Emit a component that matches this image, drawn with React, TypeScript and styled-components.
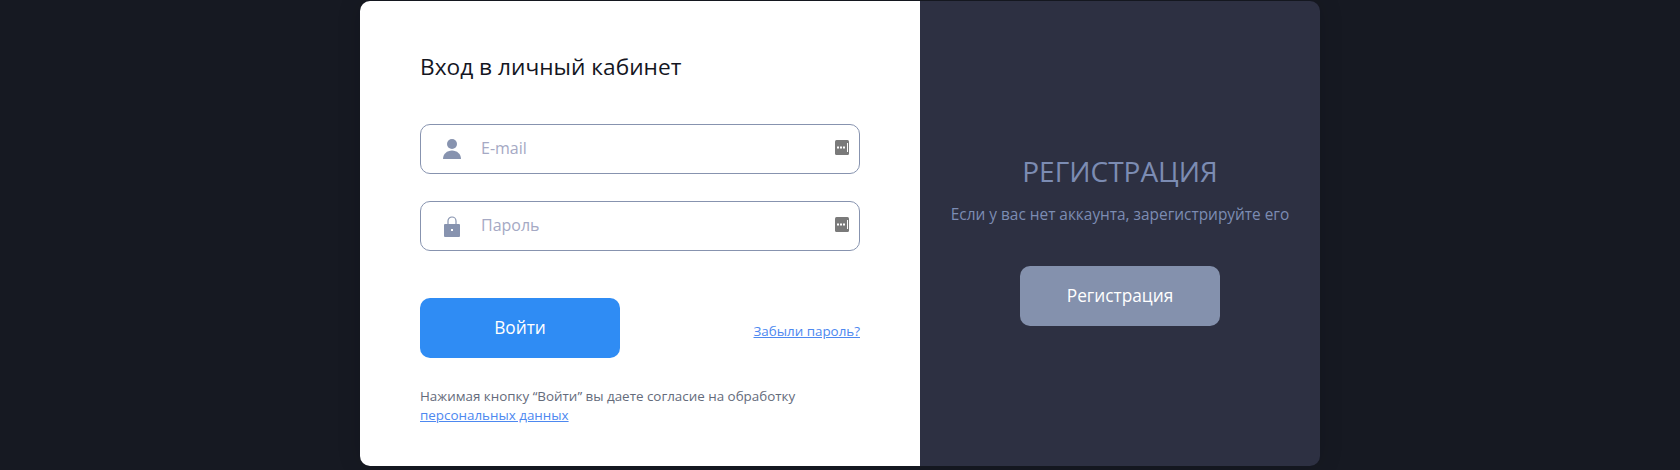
import React from "react";
import styled, { createGlobalStyle } from "styled-components";

const GlobalStyle = createGlobalStyle`
	html, body {
		margin: 0;
		padding: 0;
		background-color: #161922;
		font-family: "Open Sans", "Noto Sans", sans-serif;
	}
`;

const Page = styled.div`
	width: 1680px;
	height: 470px;
	overflow: hidden;
	display: flex;
	justify-content: center;
	padding-top: 1px;
	box-sizing: border-box;
`;

const Card = styled.div`
	display: flex;
	width: 960px;
	height: 465px;
	border-radius: 10px;
	overflow: hidden;
	box-shadow: 0 0 24px rgba(0, 0, 0, 0.14);
`;

const LoginPart = styled.form`
	width: 560px;
	box-sizing: border-box;
	background-color: #fff;
	padding: 51px 60px 0;
	display: flex;
	flex-direction: column;
`;

const Heading = styled.h2`
	margin: 0 0 42px;
	font-size: 22.7px;
	line-height: 30px;
	font-weight: 400;
	color: #14161f;
`;

const Field = styled.label`
	display: flex;
	align-items: center;
	height: 50px;
	box-sizing: border-box;
	margin-bottom: 27px;
	padding: 0 10px 0 21px;
	border: 1px solid #8793af;
	border-radius: 10px;
`;

const FieldIcon = styled.svg`
	width: 20px;
	height: 22px;
	flex: none;
	fill: #8793af;
`;

const Input = styled.input`
	flex: 1;
	min-width: 0;
	margin: -2px 0 0 19px;
	border: none;
	outline: none;
	padding: 0;
	background: transparent;
	font-family: inherit;
	font-size: 16px;
	color: #14161f;
	&::placeholder {
		color: #a5a9c4;
		opacity: 1;
	}
`;

const KeyIcon = styled.svg`
	width: 14px;
	height: 15px;
	flex: none;
	margin-top: -3px;
`;

const Actions = styled.div`
	display: flex;
	justify-content: space-between;
	align-items: flex-end;
	margin-top: 20px;
`;

const Button = styled.button<{ $tone: "blue" | "grey" }>`
	width: 200px;
	height: 60px;
	border: none;
	border-radius: 10px;
	padding: 0 0 2px;
	background-color: ${(p) => (p.$tone === "blue" ? "#2f8cf4" : "#8491ad")};
	color: #fff;
	font-family: inherit;
	font-size: 17.3px;
	font-weight: 500;
`;

const Link = styled.a`
	color: #4d88f0;
	font-size: 13.4px;
	line-height: 19px;
	text-decoration: underline;
`;

const ForgotLink = styled(Link)`
	margin-bottom: 17px;
`;

const Note = styled.p`
	margin: 29px 0 0;
	font-size: 13.4px;
	line-height: 19px;
	color: #646b7b;
`;

const RegisterPart = styled.div`
	width: 400px;
	box-sizing: border-box;
	background-color: #2d3042;
	display: flex;
	flex-direction: column;
	align-items: center;
	padding-top: 151px;
`;

const RegisterTitle = styled.h2`
	margin: 0;
	font-size: 28px;
	line-height: 38px;
	font-weight: 400;
	color: #7c8cb3;
`;

const RegisterText = styled.p`
	margin: 15px 0 41px;
	font-size: 15.4px;
	line-height: 20px;
	color: #7c8cb3;
`;

const KeyGlyph = () => (
	<KeyIcon viewBox="0 0 14 15">
		<rect width="14" height="15" rx="1.500" fill="#7a7a7a" />
		<path d="M2 6.500h2v2H2zM5 6.500h2v2H5zM8 6.500h2v2H8zM12 3h1v9h-1z" fill="#fff" />
	</KeyIcon>
);

const App = () => {
	return (
		<>
			<GlobalStyle />
			<Page>
				<Card>
					<LoginPart onSubmit={(e) => e.preventDefault()}>
						<Heading>Вход в личный кабинет</Heading>
						<Field>
							<FieldIcon viewBox="0 0 20 22">
								<circle cx="10" cy="6" r="5" />
								<path d="M1 21c0-5 4-8.500 9-8.500s9 3.500 9 8.500z" />
							</FieldIcon>
							<Input type="text" placeholder="E-mail" />
							<KeyGlyph />
						</Field>
						<Field>
							<FieldIcon viewBox="0 0 20 22">
								<path d="M3 9h14a1 1 0 0 1 1 1v11a1 1 0 0 1-1 1H3a1 1 0 0 1-1-1V10a1 1 0 0 1 1-1z" />
								<path d="M6 9V6a4 4 0 0 1 8 0v3" fill="none" stroke="#8793af" strokeWidth="1.200" />
								<rect x="9" y="14" width="2" height="2" fill="#fff" />
							</FieldIcon>
							<Input type="password" placeholder="Пароль" />
							<KeyGlyph />
						</Field>
						<Actions>
							<Button $tone="blue" type="submit">Войти</Button>
							<ForgotLink href="#">Забыли пароль?</ForgotLink>
						</Actions>
						<Note>
							Нажимая кнопку “Войти” вы даете согласие на обработку
							<br />
							<Link href="#">персональных данных</Link>
						</Note>
					</LoginPart>
					<RegisterPart>
						<RegisterTitle>РЕГИСТРАЦИЯ</RegisterTitle>
						<RegisterText>Если у вас нет аккаунта, зарегистрируйте его</RegisterText>
						<Button $tone="grey" type="button">Регистрация</Button>
					</RegisterPart>
				</Card>
			</Page>
		</>
	);
};

export default App;
